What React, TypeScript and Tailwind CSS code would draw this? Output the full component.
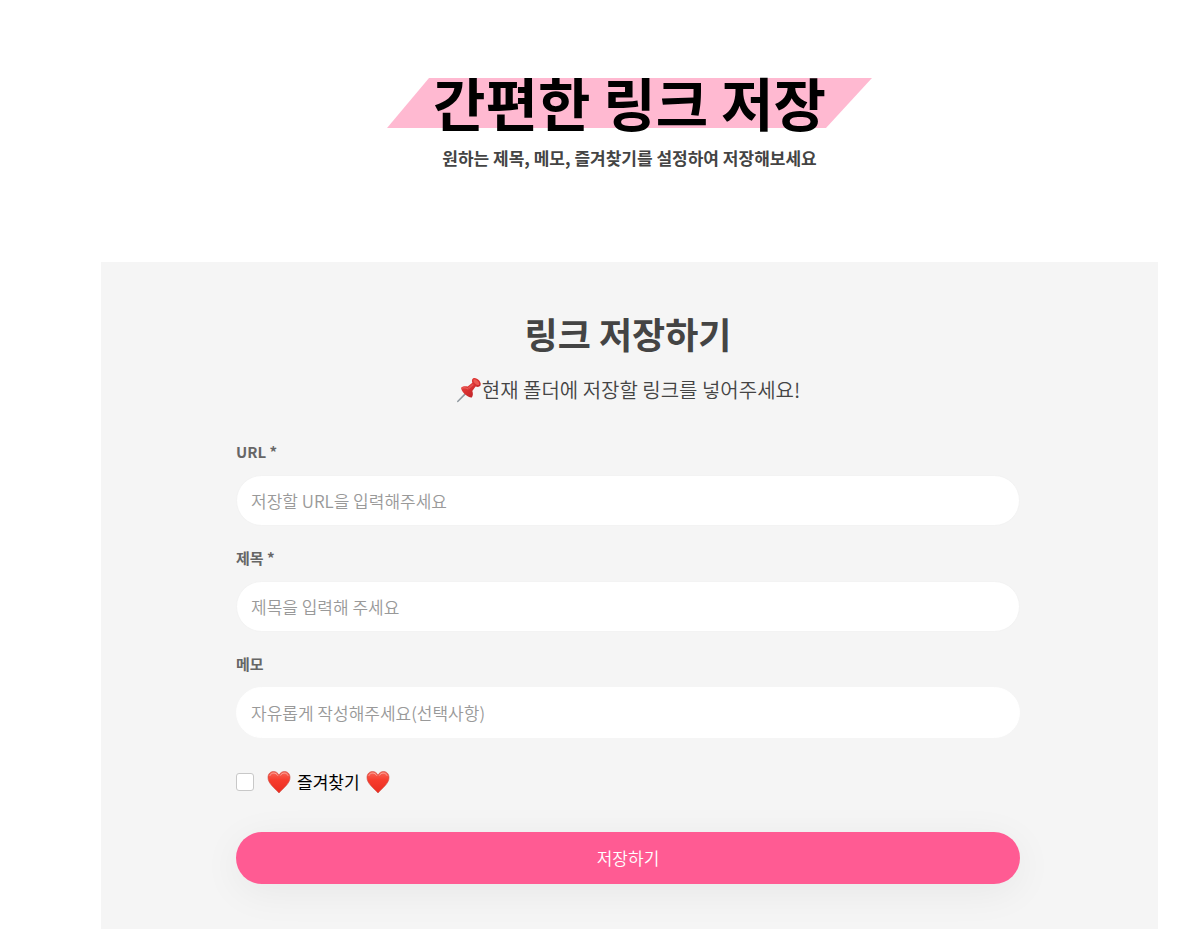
import React, { useState } from "react";

const fields = [
  { id: "url", label: "URL *", placeholder: "저장할 URL을 입력해주세요", required: true },
  { id: "title", label: "제목 *", placeholder: "제목을 입력해 주세요", required: true },
  { id: "memo", label: "메모", placeholder: "자유롭게 작성해주세요(선택사항)", required: false },
];

function PinIcon() {
  return (
    <svg viewBox="0 0 26 26" className="h-[26px] w-[26px] shrink-0" aria-hidden="true">
      <defs>
        <linearGradient id="pin-red" x1="0" y1="0" x2="1" y2="1">
          <stop offset="0" stopColor="#ea4a45" />
          <stop offset="0.5" stopColor="#d93030" />
          <stop offset="1" stopColor="#a81d24" />
        </linearGradient>
      </defs>
      <path d="M10.4 14.6 11.6 15.8 2.2 25 1 25.3 1.2 24.1Z" fill="#8e979e" />
      <path
        d="M5.2 10.4c1.8-1.4 4.3-1.6 6.5-.8l4.6-3.8c-.7-1.9-.4-3.8.9-4.5 1.6-.9 4.3.2 6 2.3 1.6 2 2 4.3.9 5.5-1 1-2.9 1-4.5.3l-3.3 4.6c.9 2.3.8 4.8-.5 6.500-1.700.3-4.900-1.200-7.400-3.800-2.300-2.300-3.600-4.800-3.200-6.300Z"
        fill="url(#pin-red)"
      />
      <path d="M17.8 2.4c1.3-.4 3.2.7 4.4 2.2 1.1 1.4 1.4 2.8.7 3.3-1.2.7-3.2-.5-4.3-2-1.1-1.4-1.5-3-.8-3.5Z" fill="#ec5a52" />
      <path d="M11.8 10.6 16.7 6.7 17.9 7.9 12.9 12.3Z" fill="#f4837b" opacity="0.4" />
      <path d="M6.2 11.2c1.9-.8 4.2-.4 6 1" fill="none" stroke="#f0756d" strokeWidth="0.8" />
    </svg>
  );
}

function HeartIcon() {
  return (
    <svg viewBox="0 0 24 24" className="h-6 w-6 shrink-0" aria-hidden="true">
      <defs>
        <linearGradient id="heart-red" x1="0" y1="0" x2="0" y2="1">
          <stop offset="0" stopColor="#f8685a" />
          <stop offset="0.4" stopColor="#f73c2d" />
          <stop offset="1" stopColor="#ea2c20" />
        </linearGradient>
      </defs>
      <path
        d="M12 5.2C10.8 2.8 8.9 1.5 6.6 1.5 3.3 1.5 1 4 1 7.6c0 5.6 5.7 9.700 11 15.400 5.300-5.700 11-9.800 11-15.400 0-3.600-2.300-6.100-5.600-6.100-2.300 0-4.200 1.300-5.400 3.700Z"
        fill="url(#heart-red)"
        stroke="#c9463c"
        strokeWidth="0.6"
      />
      <path
        d="M3 5.4c.9-1.7 2.2-2.3 3.7-2.3 1.7 0 3 .8 4 2.3M13.5 5.2c1-1.4 2.2-2.1 3.8-2.1 1.5 0 2.8.7 3.6 2.2"
        fill="none"
        stroke="#fba79c"
        strokeWidth="1"
        strokeLinecap="round"
      />
    </svg>
  );
}

function Header() {
  return (
    <header className="flex flex-col items-center">
      <h1 className="relative px-[46px] pb-1 text-[57px] leading-[46px] font-bold whitespace-nowrap text-black">
        <span className="absolute inset-0 bg-[#ffb9d1] [clip-path:polygon(42px_0,100%_0,calc(100%_-_46px)_100%,0_100%)]" />
        <span className="relative">간편한 링크 저장</span>
      </h1>
      <p className="mt-[18px] text-[17px] leading-6 font-bold text-[#444444]">
        원하는 제목, 메모, 즐겨찾기를 설정하여 저장해보세요
      </p>
    </header>
  );
}

function LinkForm() {
  const [favorite, setFavorite] = useState(false);

  return (
    <form onSubmit={(e) => e.preventDefault()} className="mt-[37px]">
      <div className="flex flex-col gap-[21px]">
        {fields.map((field) => (
          <div key={field.id} className="flex flex-col gap-3">
            <label htmlFor={field.id} className="text-[15px] leading-[22px] font-bold text-[#666666]">
              {field.label}
            </label>
            <input
              id={field.id}
              type="text"
              placeholder={field.placeholder}
              className={`h-[51px] w-full rounded-full border bg-white px-[14px] text-[17px] font-[350] text-[#444444] placeholder:text-[#999999] focus:outline-none ${
                field.required ? "border-[#f3f3f3]" : "border-white"
              }`}
            />
          </div>
        ))}
      </div>

      <div className="mt-8 flex items-center">
        <input
          id="favorite"
          type="checkbox"
          checked={favorite}
          onChange={(e) => setFavorite(e.target.checked)}
          className="h-[18px] w-[18px] appearance-none rounded-[3px] border border-[#c8c8c8] bg-white checked:bg-[#ff5b93]"
        />
        <label htmlFor="favorite" className="ml-[13px] flex items-center gap-[6px] text-[17px] leading-6 text-black">
          <HeartIcon />
          즐겨찾기
          <HeartIcon />
        </label>
      </div>

      <button
        type="submit"
        className="mt-[38px] h-[52px] w-full rounded-full bg-[#ff5b93] text-[17px] font-[350] text-white shadow-[0_8px_40px_rgba(0,0,0,0.06)]"
      >
        저장하기
      </button>
    </form>
  );
}

export default function App() {
  return (
    <div className="bg-white pt-[78px] pr-[42px] pb-[6px] pl-[101px] font-['Noto_Sans_CJK_KR',sans-serif]">
      <Header />
      <main className="mt-[92px] overflow-hidden bg-[#f5f5f5] pt-[45px] pr-[138px] pb-[45px] pl-[135px]">
        <h2 className="text-center text-[36px] leading-[52px] font-bold text-[#444444]">링크 저장하기</h2>
        <p className="mt-[17px] flex items-center justify-center text-[20px] leading-7 font-[350] text-[#444444]">
          <PinIcon />
          현재 폴더에 저장할 링크를 넣어주세요!
        </p>
        <LinkForm />
      </main>
    </div>
  );
}
